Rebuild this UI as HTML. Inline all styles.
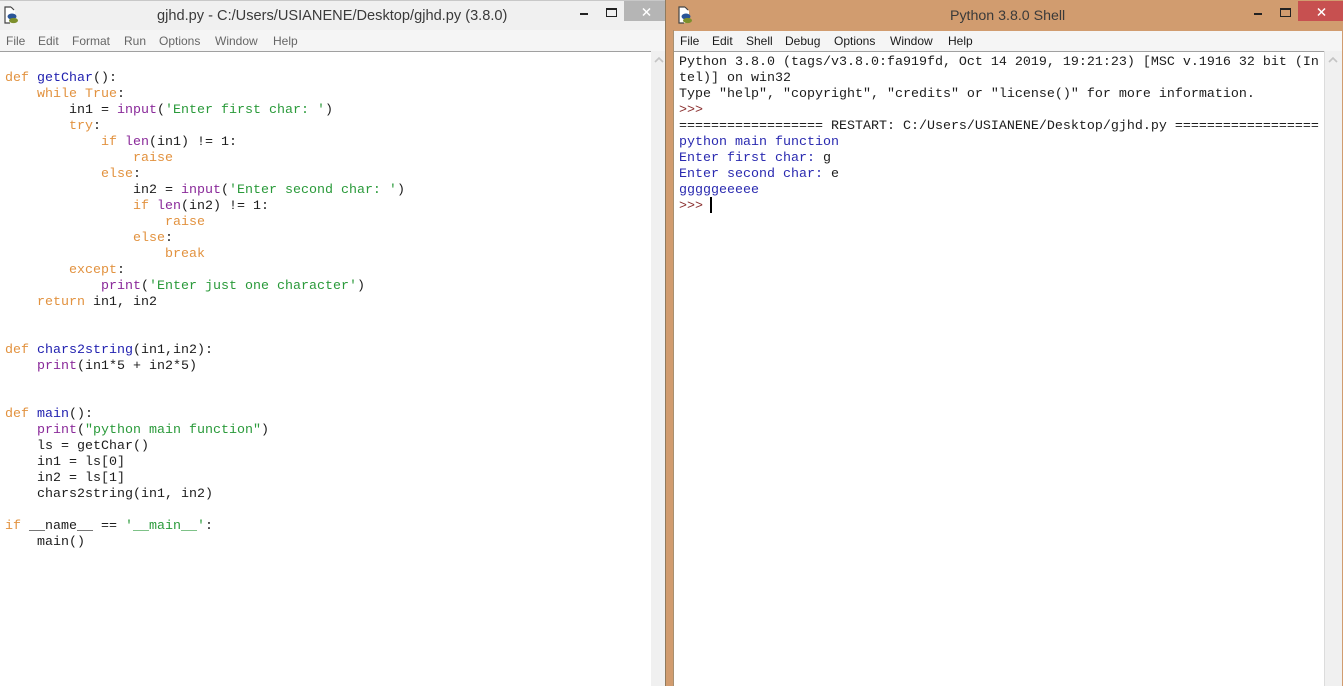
<!DOCTYPE html>
<html><head><meta charset="utf-8"><style>
html,body{margin:0;padding:0;width:1343px;height:686px;overflow:hidden;background:#fff}
div,pre{position:absolute;margin:0}
pre{font:13.33px/16px "Liberation Mono",monospace;color:#1c1c1c}
.ttl{font:14.6px/18px "Liberation Sans",sans-serif;color:#3a3a3a;white-space:nowrap}
.m{font:12px/16px "Liberation Sans",sans-serif;color:#666;top:33px;white-space:nowrap}
.r .m{color:#1a1a1a}
.k{color:#e2923f}.f{color:#2222b0}.s{color:#2a9a3a}.b{color:#8a2a9a}
.o{color:#2a2ab0}.p{color:#8a2f2f}
</style></head><body>
<div style="left:0;top:0;width:665px;height:686px;background:#f0f0f0">
 <div style="left:0;top:0;width:665px;height:1px;background:#c8c8c8"></div>
 <div style="left:0;top:30px;width:665px;height:21px;background:#f5f5f5"></div>
 <div style="left:0;top:51px;width:651px;height:1px;background:#a0a0a0"></div>
 <div style="left:0;top:52px;width:651px;height:634px;background:#fff"></div>
 <div style="left:651px;top:52px;width:14px;height:634px;background:#f0f0f0"></div>
 <svg style="position:absolute;left:654px;top:56px" width="10" height="8"><path d="M1 6L5 2L9 6" fill="none" stroke="#c4c4c4" stroke-width="1.6"/></svg>
 <svg style="position:absolute;left:2px;top:5px" width="18" height="20"><path d="M3 2H9L13 6V18H3Z" fill="#fff"/><path d="M9 2H3V18H8M9 2L12 5" fill="none" stroke="#444" stroke-width="1.2"/><ellipse cx="10" cy="11.5" rx="4.5" ry="3" fill="#2a5598"/><ellipse cx="11.5" cy="15.5" rx="4.5" ry="2.6" fill="#7d8f2c"/></svg>
 <div class="ttl" style="left:157px;top:7px">gjhd.py - C:/Users/USIANENE/Desktop/gjhd.py (3.8.0)</div>
 <div style="left:580px;top:13px;width:8px;height:2px;background:#222"></div>
 <div style="left:606px;top:8px;width:9px;height:6px;border:1px solid #222;border-top-width:2px"></div>
 <div style="left:624px;top:1px;width:41px;height:20px;background:#b5b5b5"></div>
 <svg style="position:absolute;left:642px;top:8px" width="10" height="9"><path d="M1 0.5L8 7.5M8 0.5L1 7.5" stroke="#fff" stroke-width="1.5"/></svg>
 <div class="m" style="left:6px">File</div><div class="m" style="left:38px">Edit</div><div class="m" style="left:72px">Format</div><div class="m" style="left:124px">Run</div><div class="m" style="left:159px">Options</div><div class="m" style="left:215px">Window</div><div class="m" style="left:273px">Help</div>
<pre style="left:5px;top:71px"><span class="k">def</span> <span class="f">getChar</span>():
    <span class="k">while</span> <span class="k">True</span>:
        in1 = <span class="b">input</span>(<span class="s">'Enter first char: '</span>)
        <span class="k">try</span>:
            <span class="k">if</span> <span class="b">len</span>(in1) != 1:
                <span class="k">raise</span>
            <span class="k">else</span>:
                in2 = <span class="b">input</span>(<span class="s">'Enter second char: '</span>)
                <span class="k">if</span> <span class="b">len</span>(in2) != 1:
                    <span class="k">raise</span>
                <span class="k">else</span>:
                    <span class="k">break</span>
        <span class="k">except</span>:
            <span class="b">print</span>(<span class="s">'Enter just one character'</span>)
    <span class="k">return</span> in1, in2


<span class="k">def</span> <span class="f">chars2string</span>(in1,in2):
    <span class="b">print</span>(in1*5 + in2*5)


<span class="k">def</span> <span class="f">main</span>():
    <span class="b">print</span>(<span class="s">"python main function"</span>)
    ls = getChar()
    in1 = ls[0]
    in2 = ls[1]
    chars2string(in1, in2)

<span class="k">if</span> __name__ == <span class="s">'__main__'</span>:
    main()</pre>
</div>
<div class="r" style="left:665px;top:0;width:678px;height:686px;background:#d19c6f">
 <div style="left:0;top:0;width:1px;height:686px;background:#8f7a5e"></div>
 <div style="left:8px;top:30px;width:1px;height:656px;background:#a89070"></div>
 <div style="left:9px;top:31px;width:668px;height:20px;background:#f5f5f5"></div>
 <div style="left:9px;top:51px;width:668px;height:635px;background:#fff"></div>
 <div style="left:9px;top:51px;width:650px;height:1px;background:#a0a0a0"></div>
 <div style="left:659px;top:51px;width:1px;height:635px;background:#dcdcdc"></div>
 <div style="left:660px;top:51px;width:17px;height:635px;background:#f0f0f0"></div>
 <svg style="position:absolute;left:663px;top:56px" width="10" height="8"><path d="M1 6L5 2L9 6" fill="none" stroke="#c4c4c4" stroke-width="1.6"/></svg>
 <svg style="position:absolute;left:11px;top:5px" width="18" height="20"><path d="M3 2H9L13 6V18H3Z" fill="#fff"/><path d="M9 2H3V18H8M9 2L12 5" fill="none" stroke="#444" stroke-width="1.2"/><ellipse cx="10" cy="11.5" rx="4.5" ry="3" fill="#2a5598"/><ellipse cx="11.5" cy="15.5" rx="4.5" ry="2.6" fill="#7d8f2c"/></svg>
 <div class="ttl" style="left:285px;top:7px;font-size:14.2px">Python 3.8.0 Shell</div>
 <div style="left:589px;top:13px;width:8px;height:2px;background:#222"></div>
 <div style="left:615px;top:8px;width:9px;height:6px;border:1px solid #222;border-top-width:2px"></div>
 <div style="left:633px;top:1px;width:45px;height:20px;background:#c75050"></div>
 <svg style="position:absolute;left:652px;top:8px" width="10" height="9"><path d="M1 0.5L8 7.5M8 0.5L1 7.5" stroke="#fff" stroke-width="1.5"/></svg>
 <div class="m" style="left:15px">File</div><div class="m" style="left:47px">Edit</div><div class="m" style="left:81px">Shell</div><div class="m" style="left:120px">Debug</div><div class="m" style="left:169px">Options</div><div class="m" style="left:225px">Window</div><div class="m" style="left:283px">Help</div>
<pre style="left:14px;top:55px">Python 3.8.0 (tags/v3.8.0:fa919fd, Oct 14 2019, 19:21:23) [MSC v.1916 32 bit (In
tel)] on win32
Type "help", "copyright", "credits" or "license()" for more information.
<span class="p">&gt;&gt;&gt;</span>
================== RESTART: C:/Users/USIANENE/Desktop/gjhd.py ==================
<span class="o">python main function</span>
<span class="o">Enter first char: </span>g
<span class="o">Enter second char: </span>e
<span class="o">gggggeeeee</span>
<span class="p">&gt;&gt;&gt;</span> </pre>
 <div style="left:45px;top:197px;width:2px;height:16px;background:#000"></div>
</div>
</body></html>
